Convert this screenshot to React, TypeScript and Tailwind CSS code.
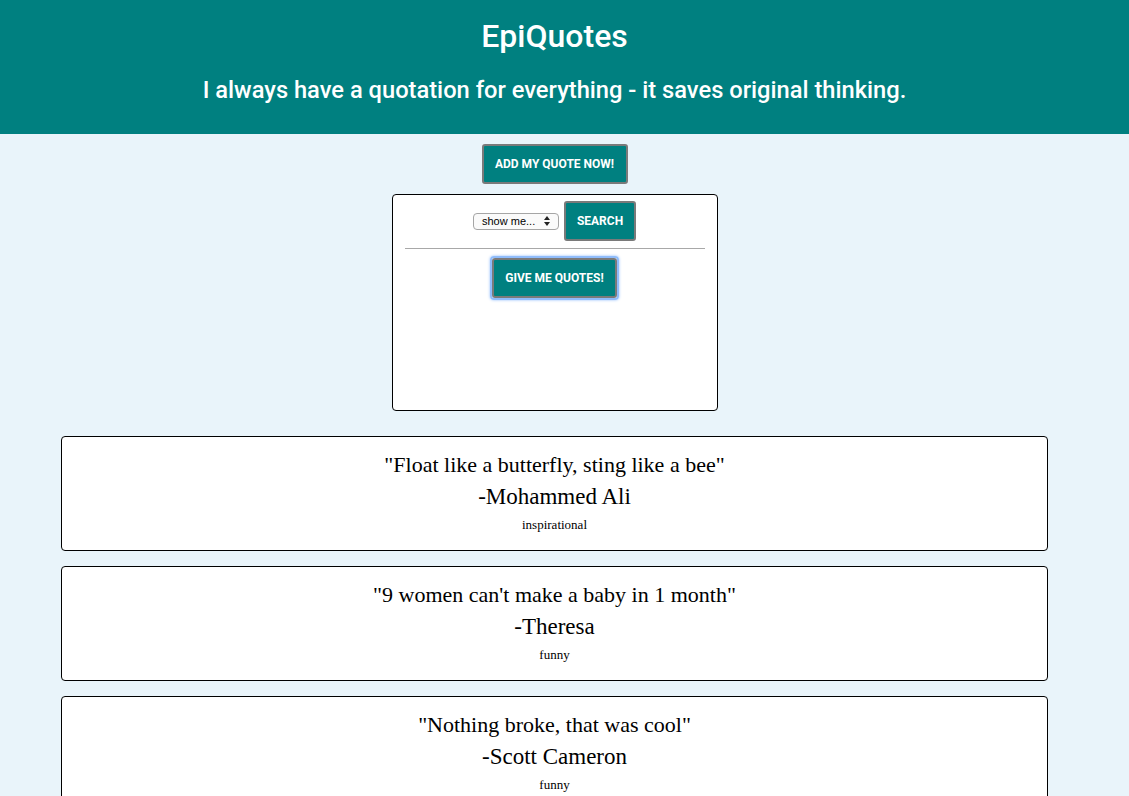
const quotes = [
  { text: '"Float like a butterfly, sting like a bee"', author: '-Mohammed Ali', tag: 'inspirational' },
  { text: '"9 women can\'t make a baby in 1 month"', author: '-Theresa', tag: 'funny' },
  { text: '"Nothing broke, that was cool"', author: '-Scott Cameron', tag: 'funny' },
]

const btn =
  'bg-[#008080] text-white font-bold text-[12px] uppercase border-2 border-[#7a7a7a] rounded-[3px] font-["Roboto",sans-serif]'

export default function App() {
  return (
    <div className="min-h-[796px] bg-[#e9f4fa] font-['Roboto',sans-serif]">
      <header className="bg-[#008080] h-[134px] text-white">
        <div className="w-[1109px] text-center pt-[14px]">
          <h1 className="text-[32px] font-medium leading-[44px]">EpiQuotes</h1>
          <p className="text-[23.7px] font-medium leading-[32px] mt-[16px]">
            I always have a quotation for everything - it saves original thinking.
          </p>
        </div>
      </header>

      <div className="w-[1109px]">
        <div className="flex flex-col items-center pt-[10px]">
          <button className={`${btn} w-[146px] h-[40px]`}>Add my quote now!</button>

          <div className="mt-[10px] w-[326px] h-[217px] bg-white border border-black rounded-[4px] px-[12px] pt-[6px]">
            <div className="flex justify-center items-center gap-[5px]">
              <div className="w-[86px] h-[17px] border border-[#a5a5a5] rounded-[4px] bg-[#fafafa] flex items-center justify-between px-[8px] text-[11px] text-black font-['Liberation_Sans',sans-serif]">
                <span>show me...</span>
                <svg width="6" height="10" viewBox="0 0 6 10">
                  <path d="M3 0 L6 4 L0 4 Z M0 6 L6 6 L3 10 Z" fill="#222" />
                </svg>
              </div>
              <button className={`${btn} w-[72px] h-[40px]`}>Search</button>
            </div>
            <div className="h-px bg-[#a8a8a8] mt-[7px]" />
            <div className="flex justify-center mt-[7px]">
              <div className="rounded-[4px] border-2 border-[#8fbcfb] shadow-[0_0_3px_#8fbcfb]">
                <button className={`${btn} w-[125px] h-[40px] block`}>Give me quotes!</button>
              </div>
            </div>
          </div>
        </div>

        <div className="ml-[61px] w-[987px] mt-[25px] flex flex-col gap-[15px] font-['Liberation_Serif',serif] text-black">
          {quotes.map((q) => (
            <div key={q.text} className="h-[115px] bg-white border border-black rounded-[4px] flex flex-col items-center pt-[13px]">
              <p className="text-[22px] leading-[30px]">{q.text}</p>
              <p className="text-[23px] leading-[34px]">{q.author}</p>
              <p className="text-[13px] leading-[20px] mt-[1px]">{q.tag}</p>
            </div>
          ))}
        </div>
      </div>
    </div>
  )
}
